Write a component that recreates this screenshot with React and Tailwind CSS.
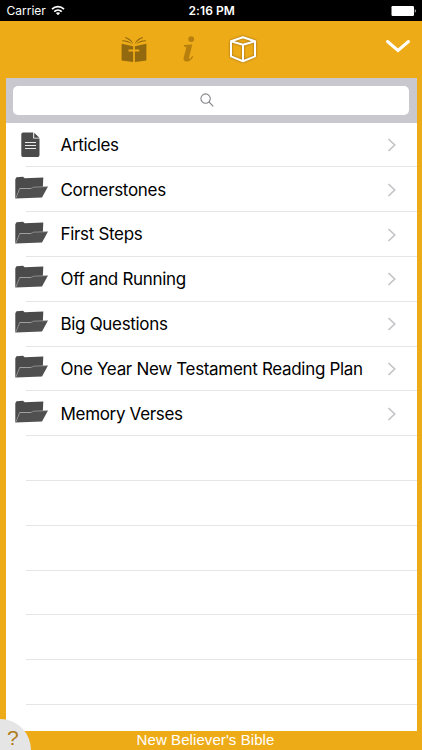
import React from 'react';

const ROWS = [
  { name: 'Articles', type: 'document' },
  { name: 'Cornerstones', type: 'folder' },
  { name: 'First Steps', type: 'folder' },
  { name: 'Off and Running', type: 'folder' },
  { name: 'Big Questions', type: 'folder' },
  { name: 'One Year New Testament Reading Plan', type: 'folder' },
  { name: 'Memory Verses', type: 'folder' },
];

// Blank rows that fill the rest of the table
const EMPTY_ROWS = 6;

const WifiIcon = () => (
  <svg viewBox="0 0 14 11" className="w-[14px] h-[11px]" fill="none" stroke="#fff" strokeWidth="1.7">
    <path d="M1 4.2C4.5 .7 9.5 .7 13 4.2" />
    <path d="M3.2 6.6c2.2-2.1 5.4-2.1 7.6 0" />
    <path d="M7 10.2 4.9 8.1c1.2-1.1 3-1.1 4.2 0z" fill="#fff" stroke="none" />
  </svg>
);

const BatteryIcon = () => (
  <svg viewBox="0 0 26 10" className="w-[26px] h-[10px]">
    <rect x="0.5" y="0" width="22.5" height="10" rx="1.2" fill="#fff" />
    <path d="M23.8 3.3c1.2.3 1.2 3.1 0 3.4z" fill="#fff" />
  </svg>
);

const BookIcon = () => (
  <svg viewBox="0 0 26 28" className="w-[26px] h-[28px]" fill="#93690f">
    <path d="M.6 8.8 12.100 11.300V14.600H7.500v1.800H12.100V27L.6 25.500z" />
    <path d="M25.400 8.8 13.900 11.300V14.600h4.400v1.800h-4.400V27l11.500-1.500z" />
    <path d="M1.200 5.200c4.200-.1 7.600 1.100 9.800 4.300C8.300 7.500 4.900 6.400 1.200 6.300z" />
    <path d="M4.600 2c4.100 1.300 6.700 3.700 7.700 7.300C10.100 6.300 7.300 4.300 4 3.100z" />
    <path d="M24.800 5.200c-4.200-.1-7.600 1.100-9.800 4.300 2.700-2 6.100-3.100 9.800-3.200z" />
    <path d="M21.400 2c-4.100 1.300-6.700 3.700-7.700 7.300 2.200-3 5-5 8.300-6.200z" />
  </svg>
);

const InfoIcon = () => (
  <svg viewBox="0 0 14 26" className="w-[14px] h-[26px]" fill="#b67f0e">
    <circle cx="9.200" cy="3.100" r="2.900" />
    <path d="M2 9 10.300 8.600 7.300 20.500c-.5 1.900-.2 2.500.4 2.400.8-.1 1.500-1.200 2.500-2.800l1 .6c-1.700 3.100-3.700 4.900-6.200 4.900-3 0-3.900-1.800-3.200-4.500l2.300-8.600c.4-1.500.1-1.900-2.300-2z" />
  </svg>
);

const CubeIcon = () => (
  <svg
    viewBox="0 0 28 28"
    className="w-[28px] h-[28px] drop-shadow-[0_0_1px_#8a6412]"
    fill="none"
    stroke="#fff"
    strokeWidth="2"
    strokeLinejoin="round"
  >
    <path d="M14 2.200 26 6.300V21.400L14 26.300 2 21.400V6.300z" />
    <path d="M2 6.300 14 9.800 26 6.300M14 9.800V26.300" />
  </svg>
);

const DocumentIcon = () => (
  <svg viewBox="0 0 20 26" className="w-[20px] h-[26px]">
    <path d="M2 .5H12.200V6.500H18.500V23.200Q18.500 25 16.800 25H2Q.3 25 .3 23.200V2.200Q.3.500 2 .5z" fill="#4b4b4b" />
    <path d="M13.200.7 18.400 5.700H13.200z" fill="#4b4b4b" />
    <path d="M4 10.500H15M4 13.500H15M4 16.500H15" stroke="#e9e9e9" strokeWidth="1" />
  </svg>
);

const FolderIcon = () => (
  <svg viewBox="0 0 34 24" className="w-[34px] h-[24px]">
    <path d="M.3 3.200 1.500 1.300 8 .8 9.700 2.200 28.300 1.500 27.800 12H5L.9 22.600.3 22z" fill="#4b4b4b" />
    <path d="M4.500 12.200H15.800L18.500 11 33 10.600 27 21.600 .5 22.600z" fill="#505050" />
    <path d="M.9 22 4.700 12.500H15.800L18.500 11.200 32.700 10.600" fill="none" stroke="#bdbdbd" strokeWidth=".55" />
  </svg>
);

const Chevron = () => (
  <svg viewBox="0 0 10 14" className="w-[10px] h-[14px]" fill="none" stroke="#c4c4c9" strokeWidth="1.700">
    <path d="M1.500 1 7.700 7 1.500 13" />
  </svg>
);

const StatusBar = () => (
  <div className="h-[21px] bg-black text-white flex items-center justify-between pl-[6.500px] pr-[5px] text-[12px]">
    <div className="w-[120px] flex items-center gap-[5px]">
      <span className="text-[12px]">Carrier</span>
      <WifiIcon />
    </div>
    <span className="font-semibold tracking-[0.100px]">2:16 PM</span>
    <div className="w-[120px] flex justify-end">
      <BatteryIcon />
    </div>
  </div>
);

const Toolbar = () => (
  <div className="h-[57px] flex items-start pl-[120.500px] pr-[11px]">
    <div className="mt-[14px]"><BookIcon /></div>
    <div className="mt-[15px] ml-[35px]"><InfoIcon /></div>
    <div className="mt-[14px] ml-[33px]"><CubeIcon /></div>
    <svg
      viewBox="0 0 26 15"
      className="w-[26px] h-[15px] ml-auto mt-[18px]"
      fill="none"
      stroke="#fff"
      strokeWidth="3"
      strokeLinecap="round"
    >
      <path d="M2.500 2.500 13 11.500 23.500 2.500" strokeLinejoin="miter" />
    </svg>
  </div>
);

const SearchBar = () => (
  <div className="h-[44.600px] shrink-0 bg-[#c9c8cf] px-[7.500px] pt-[7.500px]">
    <div className="h-[29px] rounded-[5px] bg-white flex items-center justify-center pr-[8px]">
      <svg viewBox="0 0 14 14" className="w-[14px] h-[14px]" fill="none" stroke="#85858a" strokeWidth="1.100">
        <circle cx="5.600" cy="5.600" r="4.700" />
        <path d="M9 9 13.300 13.300" />
      </svg>
    </div>
  </div>
);

const Row = ({ name, type }) => (
  <div className="h-[44.800px] shrink-0 flex pl-[9.500px]">
    <div className="w-[45.500px] shrink-0">
      {type === 'document' ? (
        <div className="pt-[9px] pl-[5.500px]"><DocumentIcon /></div>
      ) : (
        <div className="pt-[8.500px]"><FolderIcon /></div>
      )}
    </div>
    <div className="grow flex items-center justify-between pr-[20px]">
      <span className="pt-px text-[17px] tracking-[-0.320px] text-black whitespace-nowrap">{name}</span>
      <Chevron />
    </div>
  </div>
);

const Separator = () => <div className="h-px -mt-px ml-[20px] shrink-0 bg-[#e6e6e8]" />;

export default function App() {
  return (
    <div className="relative w-[422px] h-[750px] overflow-hidden flex flex-col bg-[#eeab18] font-['Inter','Liberation_Sans',sans-serif]">
      <StatusBar />
      <Toolbar />
      <div className="h-[653px] mx-[5.500px] bg-white flex flex-col overflow-hidden">
        <SearchBar />
        {ROWS.map((row) => (
          <React.Fragment key={row.name}>
            <Row name={row.name} type={row.type} />
            {/* the line overlaps the last pixel of its row */}
            <Separator />
          </React.Fragment>
        ))}
        {Array.from({ length: EMPTY_ROWS }, (_, i) => (
          <React.Fragment key={i}>
            <div className="h-[44.800px] shrink-0" />
            <Separator />
          </React.Fragment>
        ))}
      </div>
      <div className="h-[19px] flex items-center justify-center pr-[11px] text-white text-[15px] tracking-[0.080px] font-['Liberation_Sans',sans-serif]">
        New Believer's Bible
      </div>

      {/* Help button tucked into the corner */}
      <div className="absolute left-[-31px] top-[719px] w-[62px] h-[62px] rounded-full bg-[#e5e5e5]">
        <span className="absolute left-[38px] top-[3px] text-[21px] leading-[31px] text-[#b07d1c] font-['Liberation_Sans',sans-serif]">?</span>
      </div>
    </div>
  );
}
